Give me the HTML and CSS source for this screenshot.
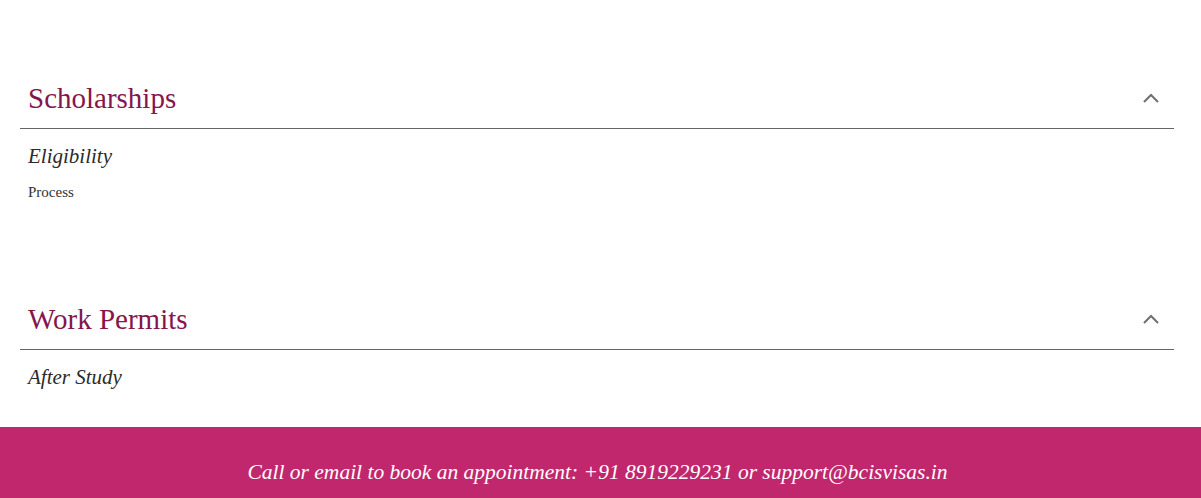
FILE: index.html
```html
<!DOCTYPE html>
<html>
<head>
<meta charset="utf-8">
<link rel="stylesheet" href="styles.css">
</head>
<body>
<main class="page">
  <section class="acc acc-first">
    <div class="acc-head">
      <h2 class="acc-title">Scholarships</h2>
      <svg class="chev" width="18" height="12" viewBox="0 0 18 12"><polyline points="2,10 9,3 16,10" fill="none" stroke="#6f6f6f" stroke-width="2"/></svg>
    </div>
    <div class="acc-body">
      <p class="sub">Eligibility</p>
      <p class="small">Process</p>
    </div>
  </section>
  <section class="acc acc-second">
    <div class="acc-head">
      <h2 class="acc-title">Work Permits</h2>
      <svg class="chev" width="18" height="12" viewBox="0 0 18 12"><polyline points="2,10 9,3 16,10" fill="none" stroke="#6f6f6f" stroke-width="2"/></svg>
    </div>
    <div class="acc-body">
      <p class="sub">After Study</p>
    </div>
  </section>
</main>
<footer class="footer">
  <p class="footer-text">Call or email to book an appointment: +91 8919229231 or support@bcisvisas.in</p>
</footer>
</body>
</html>
```

FILE: styles.css
```css
html, body {
  margin: 0;
  padding: 0;
  background: #fff;
  font-family: "Liberation Serif", "DejaVu Serif", serif;
}
.page {
  padding: 0 27px 0 20px;
}
.acc-first { padding-top: 68px; }
.acc-second { padding-top: 87px; }
.acc-head {
  height: 60px;
  display: flex;
  align-items: center;
  justify-content: space-between;
  padding: 0 14px 0 8px;
  border-bottom: 1px solid #666;
}
.acc-title {
  margin: 0;
  font-weight: 400;
  font-size: 29px;
  color: #85164c;
}
.chev { display: block; }
.acc-body {
  padding: 12px 8px 0 8px;
}
.sub {
  margin: 0;
  font-style: italic;
  font-size: 21px;
  line-height: 30px;
  color: #2b2b2b;
}
.small {
  margin: 11px 0 0 0;
  font-size: 15px;
  line-height: 20px;
  color: #333;
}
.footer {
  margin-top: 35px;
  background: #c1276d;
  height: 71px;
  display: flex;
  justify-content: center;
  padding: 31px 6px 0 0;
  box-sizing: border-box;
}
.footer-text {
  margin: 0;
  color: #fff;
  font-style: italic;
  font-size: 21.5px;
  line-height: 28px;
}
```
